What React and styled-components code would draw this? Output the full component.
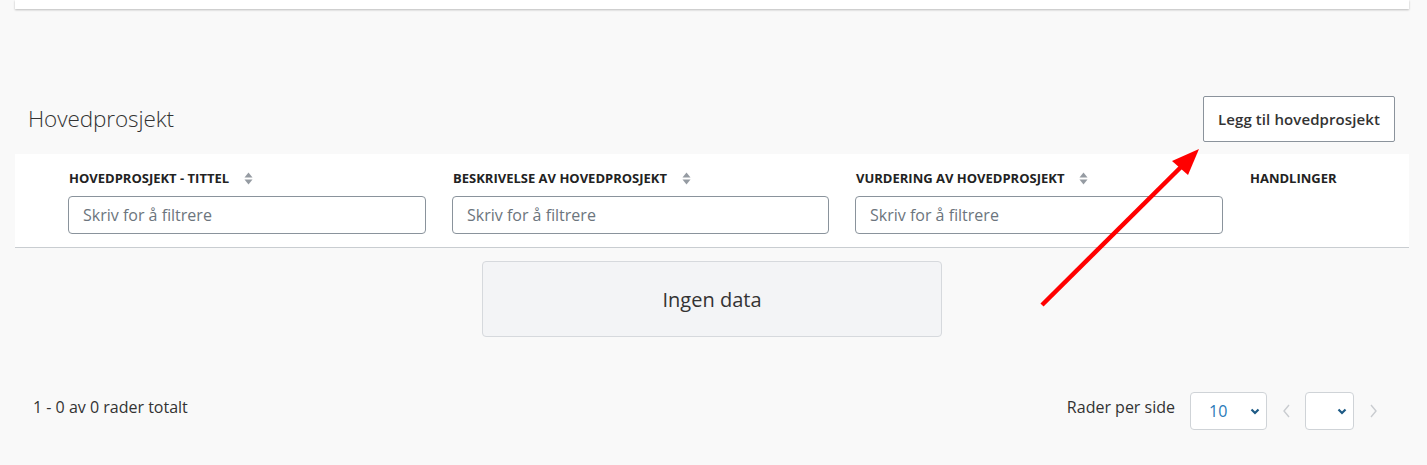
import React from 'react';
import styled, { createGlobalStyle } from 'styled-components';

const GlobalStyle = createGlobalStyle`
  body {
    margin: 0;
    background: #f9f9f9;
    font-family: "Open Sans", "Liberation Sans", sans-serif;
    color: #333;
  }
`;

const columns = [
    { key: 'tittel', label: 'Hovedprosjekt - tittel', sortable: true },
    { key: 'beskrivelse', label: 'Beskrivelse av hovedprosjekt', sortable: true },
    { key: 'vurdering', label: 'Vurdering av hovedprosjekt', sortable: true },
    { key: 'handlinger', label: 'Handlinger', sortable: false },
];

function SortIcon() {
    return (
        <svg width="9" height="13" viewBox="0 0 9 13">
            <path d="M4.5 0.5 L8.5 5.5 L0.5 5.5 Z" fill="#959ba2" />
            <path d="M4.5 12.5 L8.5 7.5 L0.5 7.5 Z" fill="#959ba2" />
        </svg>
    );
}

function Chevron({ dir }) {
    const d = dir === 'left' ? 'M7 1 L2 7 L7 13' : 'M2 1 L7 7 L2 13';
    return (
        <svg width="9" height="14" viewBox="0 0 9 14">
            <path d={d} fill="none" stroke="#c9ccd0" strokeWidth="1.4" />
        </svg>
    );
}

function SelectBox({ value, width }) {
    return (
        <Select $width={width}>
            <SelectValue>{value}</SelectValue>
            <svg width="10" height="7" viewBox="0 0 10 7">
                <path d="M1.5 1.5 L5 5 L8.5 1.5" fill="none" stroke="#1d5a85" strokeWidth="2.2" />
            </svg>
        </Select>
    );
}

export default function App() {
    return (
        <Page>
            <GlobalStyle />
            <TopCard />
            <Section>
                <SectionHeader>
                    <Heading>Hovedprosjekt</Heading>
                    <AddButton>Legg til hovedprosjekt</AddButton>
                </SectionHeader>
                <TableHead>
                    {columns.map((col) => (
                        <HeadCell key={col.key}>
                            <HeadLabel>
                                {col.label}
                                {col.sortable && <SortIcon />}
                            </HeadLabel>
                            {col.sortable && <FilterInput placeholder="Skriv for å filtrere" />}
                        </HeadCell>
                    ))}
                </TableHead>
                <EmptyRow>
                    <EmptyBox>Ingen data</EmptyBox>
                </EmptyRow>
                <Footer>
                    <Total>1 - 0 av 0 rader totalt</Total>
                    <Pager>
                        <PagerLabel>Rader per side</PagerLabel>
                        <SelectBox value="10" width={77} />
                        <PageArrow><Chevron dir="left" /></PageArrow>
                        <SelectBox value="" width={49} />
                        <PageArrow><Chevron dir="right" /></PageArrow>
                    </Pager>
                </Footer>
            </Section>
            <Annotation width="1427" height="465" viewBox="0 0 1427 465">
                <line x1="1042" y1="305" x2="1182" y2="166" stroke="#ff0000" strokeWidth="4.5" />
                <polygon points="1199,149 1172,161 1188,175" fill="#ff0000" />
            </Annotation>
        </Page>
    );
}

const Page = styled.div`
    position: relative;
    width: 1427px;
    height: 465px;
    overflow: hidden;
`;

const TopCard = styled.div`
    margin: 0 18px 0 15px;
    height: 9px;
    background: #fff;
    box-shadow: 0 1px 2px rgba(0, 0, 0, 0.25);
`;

const Section = styled.div`
    padding: 87px 18px 0 15px;
    display: flex;
    flex-direction: column;
`;

const SectionHeader = styled.div`
    display: flex;
    justify-content: space-between;
    align-items: center;
    padding: 0 14px 0 13px;
    height: 46px;
    margin-bottom: 12px;
`;

const Heading = styled.h2`
    margin: 0 0 2px;
    font-family: "Open Sans", "Liberation Sans", sans-serif;
    font-weight: 300;
    font-size: 22.5px;
    color: #333;
    letter-spacing: -0.1px;
`;

const AddButton = styled.button`
    height: 46px;
    padding: 0 14px;
    background: #fff;
    border: 1px solid #8b939c;
    border-radius: 2px;
    font-family: "Open Sans", "Liberation Sans", sans-serif;
    font-weight: 600;
    font-size: 15px;
    letter-spacing: 0.1px;
    color: #333;
    cursor: pointer;
`;

const TableHead = styled.div`
    display: grid;
    grid-template-columns: 358px 377px 368px auto;
    column-gap: 26px;
    padding: 15px 0 13px 53px;
    background: #fff;
    border-bottom: 1px solid #c9cdd1;
`;

const HeadCell = styled.div`
    display: flex;
    flex-direction: column;
    gap: 9px;
`;

const HeadLabel = styled.div`
    display: flex;
    align-items: center;
    gap: 15px;
    height: 18px;
    padding-left: 1px;
    font-size: 13px;
    font-weight: 700;
    text-transform: uppercase;
    color: #222;
`;

const FilterInput = styled.input`
    box-sizing: border-box;
    width: 100%;
    height: 38px;
    padding: 0 14px;
    border: 1px solid #8a939c;
    border-radius: 4px;
    background: #fff;
    font-family: "Open Sans", "Liberation Sans", sans-serif;
    font-size: 16px;
    &::placeholder {
        color: #6c757d;
        font-weight: 500;
    }
`;

const EmptyRow = styled.div`
    display: flex;
    justify-content: center;
    padding-top: 13px;
`;

const EmptyBox = styled.div`
    width: 460px;
    height: 76px;
    box-sizing: border-box;
    display: flex;
    align-items: center;
    justify-content: center;
    background: #f3f4f6;
    border: 1px solid #d6d9dd;
    border-radius: 4px;
    font-size: 20px;
    color: #333;
`;

const Footer = styled.div`
    display: flex;
    justify-content: space-between;
    align-items: center;
    margin-top: 55px;
    padding: 0 17px 0 18px;
`;

const Total = styled.div`
    font-size: 16px;
    color: #333;
    margin-top: -8px;
`;

const Pager = styled.div`
    display: flex;
    align-items: center;
`;

const PagerLabel = styled.span`
    font-size: 16px;
    color: #333;
    margin-right: 15px;
    margin-top: -8px;
`;

const Select = styled.div`
    box-sizing: border-box;
    width: ${(p) => p.$width}px;
    height: 38px;
    display: flex;
    align-items: center;
    justify-content: space-between;
    padding: 0 6px 0 18px;
    background: #fff;
    border: 1px solid #cfd3d7;
    border-radius: 4px;
`;

const SelectValue = styled.span`
    font-size: 16px;
    color: #2a7ab8;
`;

const PageArrow = styled.span`
    display: flex;
    align-items: center;
    justify-content: center;
    width: 38px;
`;

const Annotation = styled.svg`
    position: absolute;
    left: 0;
    top: 0;
    pointer-events: none;
`;
